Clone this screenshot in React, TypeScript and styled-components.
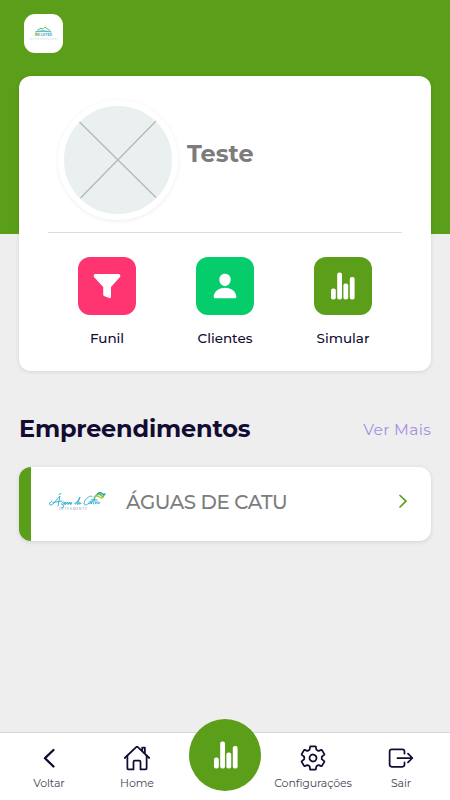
import React from "react";
import styled, { createGlobalStyle } from "styled-components";
import {
  IoExitOutline,
  IoHomeOutline,
  IoPerson,
  IoSettingsOutline,
} from "react-icons/io5";

const GREEN = "#5a9e1a";
const INK = "#140b33";

const GlobalStyle = createGlobalStyle`
  * { box-sizing: border-box; }
  body {
    margin: 0;
    background: #eeeeee;
    font-family: Montserrat, Inter, "Open Sans", sans-serif;
  }
`;

const Screen = styled.div`
  width: 100%;
  height: 800px;
  display: flex;
  flex-direction: column;
  background: linear-gradient(${GREEN} 234px, #eeeeee 234px);
  overflow: hidden;
`;

const Header = styled.header`
  height: 76px;
  flex: none;
  padding: 14px 24px;
`;

const Brand = styled.div`
  width: 39px;
  height: 39px;
  border-radius: 11px;
  background: #fff;
  display: flex;
  align-items: center;
  justify-content: center;
`;

const Main = styled.main`
  flex: 1;
  padding: 0 19px;
`;

const Card = styled.section`
  height: 295px;
  border-radius: 12px;
  background: #fff;
  padding: 24px 29px 0;
  box-shadow: 0 1px 4px rgba(0, 0, 0, 0.1);
`;

const Profile = styled.div`
  height: 133px;
  padding-left: 10px;
  display: flex;
  align-items: flex-start;
  border-bottom: 1px solid #d9dcde;
`;

const Avatar = styled.div`
  width: 120px;
  height: 120px;
  flex: none;
  border-radius: 50%;
  border: 6px solid #fff;
  background: #eaf0f0;
  box-shadow: 0 1px 4px rgba(0, 0, 0, 0.07);
  svg { display: block; }
`;

const Label = styled.span<{ $size: number; $spacing?: number; $weight?: number; $color?: string }>`
  font-size: ${(p) => p.$size}px;
  letter-spacing: ${(p) => p.$spacing ?? 0}px;
  font-weight: ${(p) => p.$weight ?? 400};
  color: ${(p) => p.$color ?? INK};
  line-height: 1.2;
  white-space: nowrap;
`;

const Name = styled.div`
  padding: 40px 0 0 9px;
`;

const Actions = styled.div`
  display: grid;
  grid-template-columns: repeat(3, 1fr);
  padding-top: 24px;
`;

const Action = styled.div`
  display: flex;
  flex-direction: column;
  align-items: center;
  gap: 15px;
`;

const Tile = styled.div<{ $color: string }>`
  width: 58px;
  height: 58px;
  border-radius: 12px;
  background: ${(p) => p.$color};
  color: #fff;
  display: flex;
  align-items: center;
  justify-content: center;
`;

const SectionHead = styled.div`
  height: 96px;
  padding-top: 44px;
  display: flex;
  justify-content: space-between;
  align-items: flex-start;
`;

const More = styled.div`
  padding-top: 5px;
`;

const Project = styled.article`
  height: 74px;
  border-radius: 12px;
  border-left: 12px solid ${GREEN};
  background: #fff;
  display: flex;
  align-items: center;
  padding: 0 23px 3px 18px;
  box-shadow: 0 1px 4px rgba(0, 0, 0, 0.12);
`;

const ProjectName = styled.div`
  flex: 1;
  padding-left: 19px;
`;

const NavBar = styled.nav`
  height: 68px;
  flex: none;
  background: #fff;
  border-top: 1px solid #d4d5e0;
  padding: 0 5px;
  display: grid;
  grid-template-columns: repeat(5, 1fr);
`;

const NavItem = styled.div`
  display: flex;
  flex-direction: column;
  align-items: center;
  padding-top: 11px;
  gap: 5px;
  color: ${INK};
  svg { flex: none; }
`;

const NavMain = styled.div`
  width: 72px;
  height: 72px;
  margin: -14px auto 0;
  padding-left: 1px;
  border-radius: 50%;
  background: ${GREEN};
  display: flex;
  align-items: center;
  justify-content: center;
`;

const Bars = () => (
  <svg width="26" height="28" viewBox="0 0 26 28" fill="#fff">
    <rect x="1" y="16.5" width="4.8" height="11" rx="2" />
    <rect x="7.2" y="0.5" width="4.8" height="27" rx="2" />
    <rect x="13.4" y="11.5" width="4.8" height="16" rx="2" />
    <rect x="19.8" y="5" width="4.8" height="22.5" rx="2" />
  </svg>
);

const Funnel = () => (
  <svg width="28" height="26" viewBox="0 0 28 26" fill="#fff">
    <path d="M2 1H26Q28 1.6 27 4L18 14V24Q17.6 25.6 16 25L11 23Q10.2 22.5 10.2 21.5V14L1 4Q0 1.6 2 1Z" />
  </svg>
);

const BackIcon = () => (
  <svg width="28" height="28" viewBox="0 0 28 28" fill="none" stroke="currentColor" strokeWidth="2.3" strokeLinecap="round" strokeLinejoin="round">
    <path d="M18.5 6 10 14.2 18.5 22.5" />
  </svg>
);

const ForwardIcon = () => (
  <svg width="10" height="18" viewBox="0 0 10 18" fill="none" stroke={GREEN} strokeWidth="1.7" strokeLinecap="round" strokeLinejoin="round">
    <path d="M2 1.5 8 7.2 2 13" />
  </svg>
);

const BrandLogo = () => (
  <svg width="30" height="16" viewBox="0 0 30 16">
    <path d="M8 4.5 12 2.2 14 3.2 16 1.2 21.5 5" fill="none" stroke="#65a951" strokeWidth=".9" />
    <path d="M6 6Q14 3 22.5 6Q15 5 6 6" fill="#35b4c4" stroke="#35b4c4" strokeWidth=".5" />
    <text x="6" y="10.3" fontSize="3.4" fontWeight="700" fontFamily="Inter" fill="#30acba">
      <tspan fill="#71a83c">REI</tspan> LOTES
    </text>
    <path d="M.5 12.9H29" stroke="#8ccbd3" strokeWidth=".7" strokeDasharray="1 .7" />
  </svg>
);

const ProjectLogo = () => (
  <svg width="58" height="22" viewBox="0 0 58 22" fill="none" strokeLinecap="round" strokeLinejoin="round">
    <g stroke="#27add0" strokeWidth="0.9">
      <path d="M3 9C-1 11 0 15 4 12L11 4 9 14M4 10.5 13 9M10 2.5 12 1.5" />
      <path d="M14.5 10C12 10 12 14 14 12.5L16 10 14 15.5 12 16M17 10 16.5 12.5 19 10 18.7 12.5 20 11.5C22 10 20 9 20 12L22 11C21 14 23 12.5 22.5 10.5" />
      <path d="M28 10C25 10.5 25.5 13.5 27.5 11.5L31 5 28.5 12.5M30 11.5C32 10 31 9.5 29.7 12L32 11.5" />
      <path d="M43 5C43 2 36 6 35 11 35 15 39 12 40 11M42 9C39 10 39 13 41 11.5L42.5 9.5 42 12 46 5 44.5 12M42.5 7.8H48M47 9 46.5 12 49 9.5 49 12 51 10.5" />
    </g>
    <g strokeWidth="1.4">
      <path d="M45 5Q48 3 50.5 5T54 5" stroke="#a7cc2f" />
      <path d="M47 3.2Q49.5 1 51.8 3.2T55 3.2" stroke="#68b83b" />
      <path d="M49 1.4Q51 0 53 1.6T56 1.8" stroke="#239fa8" />
    </g>
    <text x="10" y="18" fontSize="2.8" textLength="28" fontFamily="Inter" fill="#85939a">LOTEAMENTO</text>
  </svg>
);

const NAV_COLOR = "#434658";

export default function App() {
  return (
    <>
      <GlobalStyle />
      <Screen>
        <Header>
          <Brand><BrandLogo /></Brand>
        </Header>
        <Main>
          <Card>
            <Profile>
              <Avatar>
                <svg width="108" height="108" viewBox="0 0 108 108" stroke="#b4b8b9" strokeWidth="1.3">
                  <path d="M15.5 16 92 91.5M92 15 16.5 92" />
                </svg>
              </Avatar>
              <Name>
                <Label $size={24} $weight={700} $color="#7c7c7c">Teste</Label>
              </Name>
            </Profile>
            <Actions>
              <Action>
                <Tile $color="#ff3572"><Funnel /></Tile>
                <Label $size={13.5} $weight={500}>Funil</Label>
              </Action>
              <Action>
                <Tile $color="#05cd6b"><IoPerson size={28} /></Tile>
                <Label $size={13.5} $weight={500}>Clientes</Label>
              </Action>
              <Action>
                <Tile $color={GREEN}><Bars /></Tile>
                <Label $size={13.5} $weight={500}>Simular</Label>
              </Action>
            </Actions>
          </Card>
          <SectionHead>
            <Label $size={24} $weight={700} $spacing={-0.2}>Empreendimentos</Label>
            <More><Label $size={15.5} $spacing={0.3} $color="#a68ee6">Ver Mais</Label></More>
          </SectionHead>
          <Project>
            <ProjectLogo />
            <ProjectName>
              <Label $size={19.8} $spacing={-0.4} $weight={500} $color="#7c7d7d">ÁGUAS DE CATU</Label>
            </ProjectName>
            <ForwardIcon />
          </Project>
        </Main>
        <NavBar>
          <NavItem>
            <BackIcon />
            <Label $size={11} $spacing={-0.1} $color={NAV_COLOR}>Voltar</Label>
          </NavItem>
          <NavItem>
            <IoHomeOutline size={28} />
            <Label $size={11} $spacing={-0.1} $color={NAV_COLOR}>Home</Label>
          </NavItem>
          <NavMain><Bars /></NavMain>
          <NavItem>
            <IoSettingsOutline size={28} />
            <Label $size={11} $spacing={-0.1} $color={NAV_COLOR}>Configurações</Label>
          </NavItem>
          <NavItem>
            <IoExitOutline size={28} />
            <Label $size={11} $spacing={-0.1} $color={NAV_COLOR}>Sair</Label>
          </NavItem>
        </NavBar>
      </Screen>
    </>
  );
}
